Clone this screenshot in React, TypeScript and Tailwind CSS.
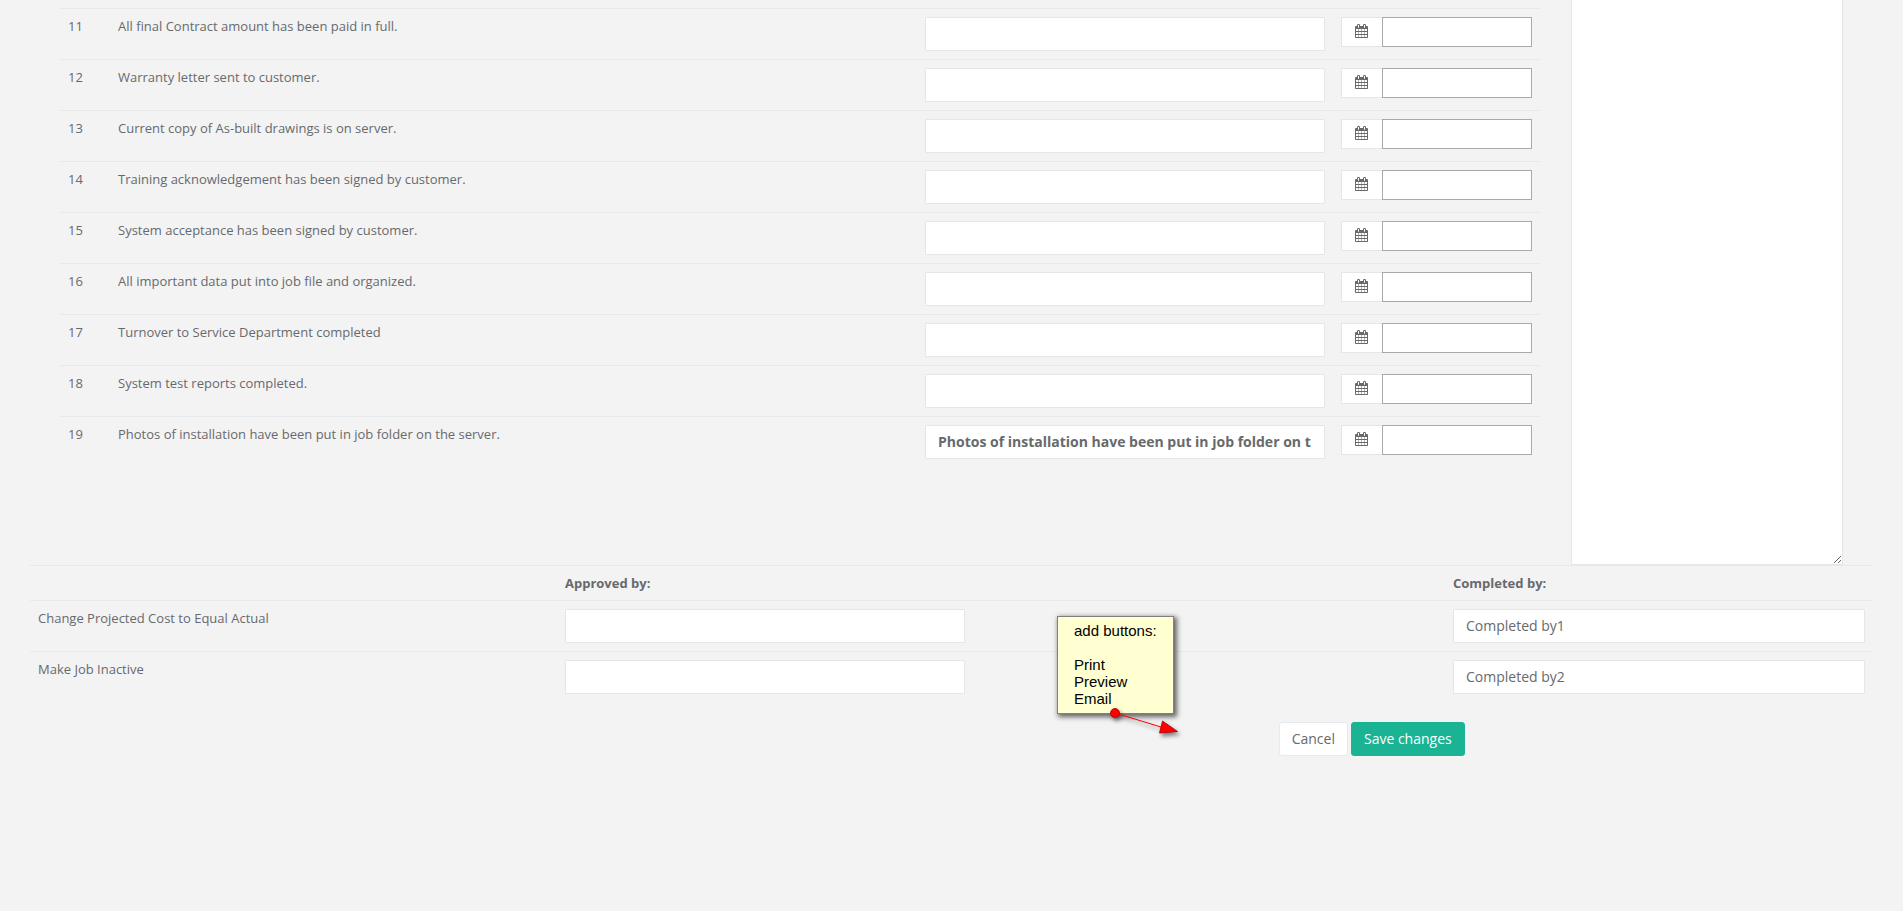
import { useState } from "react";

const checklist = [
  { id: 11, label: "All final Contract amount has been paid in full.", note: "" },
  { id: 12, label: "Warranty letter sent to customer.", note: "" },
  { id: 13, label: "Current copy of As-built drawings is on server.", note: "" },
  { id: 14, label: "Training acknowledgement has been signed by customer.", note: "" },
  { id: 15, label: "System acceptance has been signed by customer.", note: "" },
  { id: 16, label: "All important data put into job file and organized.", note: "" },
  { id: 17, label: "Turnover to Service Department completed", note: "" },
  { id: 18, label: "System test reports completed.", note: "" },
  {
    id: 19,
    label: "Photos of installation have been put in job folder on the server.",
    note: "Photos of installation have been put in job folder on t",
  },
];

const approvals = [
  { id: 1, label: "Change Projected Cost to Equal Actual", completedBy: "Completed by1" },
  { id: 2, label: "Make Job Inactive", completedBy: "Completed by2" },
];

const cell = "border-t border-[#e7eaec] p-2 text-left align-top";
const field =
  "block h-[34px] rounded-[1px] border border-[#e5e6e7] bg-white px-3 pb-0.5 text-sm text-[#676a6c] outline-none focus:border-[#1ab394]";

function CalendarIcon() {
  return (
    <svg viewBox="64 0 1664 1792" className="h-[14px] w-[13px]" fill="currentColor" fillRule="evenodd" aria-hidden="true">
      <path d="M192 1664h288v-256h-288zM544 1664h320v-256h-320zM928 1664h320v-256h-320zM1312 1664h288v-256h-288zM192 1280h288v-256h-288zM544 1280h320v-256h-320zM928 1280h320v-256h-320zM1312 1280h288v-256h-288zM192 896h288v-256h-288zM544 896h320v-256h-320zM928 896h320v-256h-320zM1312 896h288v-256h-288zM576 448v-288q0-13-9.5-22.5t-22.5-9.5h-64q-13 0-22.5 9.5t-9.5 22.5v288q0 13 9.5 22.5t22.5 9.5h64q13 0 22.5-9.5t9.5-22.5zM1344 448v-288q0-13-9.5-22.5t-22.5-9.5h-64q-13 0-22.5 9.5t-9.5 22.5v288q0 13 9.5 22.5t22.5 9.5h64q13 0 22.5-9.5t9.5-22.5zM1728 384v1280q0 52-38 90t-90 38h-1408q-52 0-90-38t-38-90v-1280q0-52 38-90t90-38h128v-96q0-66 47-113t113-47h64q66 0 113 47t47 113v96h384v-96q0-66 47-113t113-47h64q66 0 113 47t47 113v96h128q52 0 90 38t38 90z" />
    </svg>
  );
}

function ChecklistTable() {
  const [notes, setNotes] = useState<Record<number, string>>(
    Object.fromEntries(checklist.map((item) => [item.id, item.note]))
  );

  return (
    <table className="w-full table-fixed border-separate border-spacing-0">
      <colgroup>
        <col className="w-[50px]" />
        <col />
        <col className="w-[416px]" />
        <col className="w-[207px]" />
      </colgroup>
      <tbody>
        {checklist.map((item) => (
          <tr key={item.id}>
            <td className={cell}>{item.id}</td>
            <td className={cell}>
              <label htmlFor={`note-${item.id}`}>{item.label}</label>
            </td>
            <td className={cell}>
              <input
                id={`note-${item.id}`}
                type="text"
                className={`${field} w-full font-bold`}
                value={notes[item.id]}
                onChange={(e) => setNotes({ ...notes, [item.id]: e.target.value })}
              />
            </td>
            <td className={cell}>
              <div className="flex h-[30px]">
                <label
                  htmlFor={`date-${item.id}`}
                  aria-label={`Date for item ${item.id}`}
                  className="w-[41px] rounded-l-[1px] border border-r-0 border-[#e5e6e7] bg-white pt-1.5 pl-[13px]"
                >
                  <CalendarIcon />
                </label>
                <input
                  id={`date-${item.id}`}
                  type="text"
                  className="w-[150px] border border-[#a9a9a9] bg-white px-1 outline-none"
                />
              </div>
            </td>
          </tr>
        ))}
      </tbody>
    </table>
  );
}

function ApprovalTable() {
  return (
    <table className="w-full table-fixed border-separate border-spacing-0">
      <colgroup>
        <col className="w-[527px]" />
        <col />
        <col className="w-[428px]" />
      </colgroup>
      <thead>
        <tr>
          <td className={cell}></td>
          <th className={`${cell} font-bold`}>Approved by:</th>
          <th className={`${cell} font-bold`}>Completed by:</th>
        </tr>
      </thead>
      <tbody>
        {approvals.map((row) => (
          <tr key={row.id}>
            <td className={cell}>
              <label htmlFor={`approved-${row.id}`}>{row.label}</label>
            </td>
            <td className={cell}>
              <input id={`approved-${row.id}`} type="text" className={`${field} w-[400px]`} />
            </td>
            <td className={cell}>
              <input
                type="text"
                aria-label={row.completedBy}
                defaultValue={row.completedBy}
                className={`${field} w-full`}
              />
            </td>
          </tr>
        ))}
      </tbody>
    </table>
  );
}

function StickyNote() {
  return (
    <div className="absolute top-[616px] left-[1057px] font-['Liberation_Sans',Arial,sans-serif] text-[15px] leading-[17px] text-black">
      <div className="h-[98px] w-[117px] border border-[#7f7f7f] bg-[#ffffd2] pt-[5px] pl-4 shadow-[2px_2px_5px_1px_rgba(0,0,0,0.6)]">
        <p>add buttons:</p>
        <p className="mt-[17px]">Print</p>
        <p>Preview</p>
        <p>Email</p>
      </div>
      <svg
        className="absolute top-[88px] left-[48px] h-[40px] w-[84px] drop-shadow-[2px_3px_2px_rgba(0,0,0,0.5)]"
        viewBox="0 0 84 40"
        aria-hidden="true"
      >
        <path d="M10 9L56 23" stroke="#ff0000" strokeWidth="1" />
        <circle cx="10" cy="9" r="4.5" fill="#ff0000" stroke="#a00000" strokeWidth="0.8" />
        <path d="M57.5 17L72.5 27.5L54.5 29Z" fill="#ff0000" stroke="#a00000" strokeWidth="0.8" />
      </svg>
    </div>
  );
}

export default function App() {
  return (
    <div className="relative min-h-screen bg-[#f3f3f4] font-['Open_Sans',sans-serif] text-[13px] leading-[18px] text-[#676a6c]">
      <form onSubmit={(e) => e.preventDefault()}>
        <div className="flex gap-[31px] px-[60px]">
          <div className="min-w-0 flex-1 pt-2">
            <ChecklistTable />
          </div>
          <textarea
            aria-label="Notes"
            className="block h-[565px] w-[272px] rounded-b-[1px] border border-t-0 border-[#e5e6e7] bg-white px-3 py-1.5 text-sm outline-none"
          />
        </div>

        <div className="px-[30px]">
          <ApprovalTable />
        </div>

        <div className="mt-5 grid grid-cols-3 text-sm">
          <div className="col-start-3 flex gap-[3px] pl-2.5">
            <button type="button" className="h-[34px] rounded-[3px] border border-[#e7eaec] bg-white px-3">
              Cancel
            </button>
            <button type="submit" className="h-[34px] rounded-[3px] border border-[#1ab394] bg-[#1ab394] px-3 text-white">
              Save changes
            </button>
          </div>
        </div>
      </form>

      <StickyNote />
    </div>
  );
}
